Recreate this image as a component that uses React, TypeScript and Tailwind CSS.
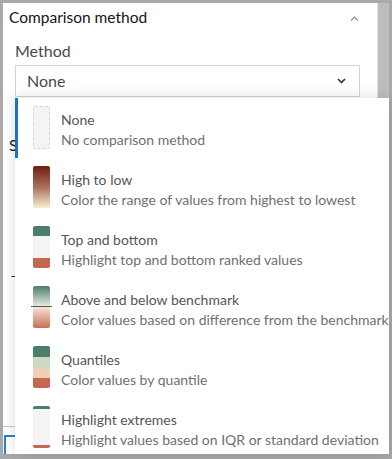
import React from "react";

type Method = { title: string; sub: string; swatch: React.ReactNode };

const font = { fontFamily: "Lato, 'Open Sans', sans-serif" };

const Swatch: React.FC<{ kind: string }> = ({ kind }) => {
    if (kind === "none")
        return <div className="w-[17px] h-[43px] rounded-[2px] border border-dashed border-[#d6d6d6] bg-[#f4f4f4]" />;
    if (kind === "high")
        return <div className="w-[17px] h-[42px] rounded-[2px] bg-[linear-gradient(to_bottom,#6f1d12,#a8705a_50%,#f7efd3)]" />;
    if (kind === "topbottom")
        return (
            <div className="w-[17px] h-[42px] rounded-[2px] overflow-hidden flex flex-col">
                <div className="h-[10px] bg-[#4d7d6b]" />
                <div className="flex-1 bg-[#f4f4f4]" />
                <div className="h-[10px] bg-[#c4684f]" />
            </div>
        );
    if (kind === "bench")
        return (
            <div className="relative w-[17px] h-[42px]">
                <div className="h-full rounded-[2px] overflow-hidden flex flex-col">
                    <div className="h-1/2 bg-[linear-gradient(to_bottom,#4d7d6b,#eaf0e7)]" />
                    <div className="h-1/2 bg-[linear-gradient(to_bottom,#f6e6d6,#c66f57)]" />
                </div>
                <div className="absolute left-[-2px] right-[-2px] top-[20px] h-px bg-[#555]" />
            </div>
        );
    if (kind === "quant")
        return (
            <div className="w-[17px] h-[42px] rounded-[2px] overflow-hidden flex flex-col">
                <div className="flex-1 bg-[#4d7d6b]" />
                <div className="flex-1 bg-[#c9d9c4]" />
                <div className="flex-1 bg-[#eed0b8]" />
                <div className="flex-1 bg-[#c4684f]" />
            </div>
        );
    return (
        <div className="w-[17px] h-[42px] rounded-[2px] overflow-hidden flex flex-col">
            <div className="h-[3px] bg-[#4d7d6b]" />
            <div className="flex-1 bg-[#f4f4f4]" />
            <div className="h-[3px] bg-[#c4684f]" />
        </div>
    );
};

const methods: Method[] = [
    { title: "None", sub: "No comparison method", swatch: <Swatch kind="none" /> },
    { title: "High to low", sub: "Color the range of values from highest to lowest", swatch: <Swatch kind="high" /> },
    { title: "Top and bottom", sub: "Highlight top and bottom ranked values", swatch: <Swatch kind="topbottom" /> },
    { title: "Above and below benchmark", sub: "Color values based on difference from the benchmark", swatch: <Swatch kind="bench" /> },
    { title: "Quantiles", sub: "Color values by quantile", swatch: <Swatch kind="quant" /> },
    { title: "Highlight extremes", sub: "Highlight values based on IQR or standard deviation", swatch: <Swatch kind="extreme" /> },
];

const App: React.FC = () => {
    return (
        <div className="relative w-[392px] h-[459px] bg-[#a9a9a9] pt-[3px] pl-[3px] pr-[3px] pb-[5px] overflow-hidden" style={font}>
            <div className="flex h-full">
                {/* panel behind the menu */}
                <div className="flex-1 bg-white flex flex-col">
                    <div className="h-[30px] flex items-center justify-between pl-[6px] pr-[18px]">
                        <span className="text-[15.5px] text-[#151515]">Comparison method</span>
                        <svg width="9" height="5" viewBox="0 0 9 5" fill="none" stroke="#8a8a8a" strokeWidth="1.1">
                            <path d="M1 4.5L4.5 1L8 4.5" />
                        </svg>
                    </div>
                    <div className="pl-[12px] pr-[17px] pt-[8px]">
                        <div className="text-[16px] text-[#4a4a4a] leading-[20px]">Method</div>
                        <div className="mt-[4px] h-[32px] border border-[#d4d4d4] flex items-center justify-between pl-[11px] pr-[13px]">
                            <span className="text-[16px] text-[#4a4a4a]">None</span>
                            <svg width="9" height="6" viewBox="0 0 9 6" fill="none" stroke="#333" strokeWidth="1.6">
                                <path d="M1 1L4.5 4.5L8 1" />
                            </svg>
                        </div>
                    </div>
                    <div className="pl-[6px] pt-[36px] text-[16px] text-[#151515]">Style</div>
                    <div className="pl-[7px] pt-[108px] text-[14px] text-[#151515]">–</div>
                    <div className="mt-auto border-t border-[#c8c8c8] h-[28px] pt-[8px] pl-px">
                        <div className="h-full border-t-2 border-l-2 border-[#2a7fd0]" />
                    </div>
                </div>
                <div className="w-[12px] bg-[#bdbdbd] border-l border-[#e2e2e2]" />
            </div>

            {/* dropdown menu */}
            <div className="absolute left-[15px] top-[98px] right-[3px] bottom-[5px] bg-white overflow-hidden shadow-[0_0_14px_rgba(0,0,0,0.14)]">
                {methods.map((m, i) => (
                    <div
                        key={m.title}
                        className={`h-[60px] flex items-start gap-[11px] pl-[15px] border-l-[3px] ${i === 0 ? "border-[#1a73c8]" : "border-transparent"}`}
                    >
                        <div className="pt-[8px] shrink-0">{m.swatch}</div>
                        <div className="pt-[12px] whitespace-nowrap">
                            <div className="text-[14px] leading-[20px] text-[#555]">{m.title}</div>
                            <div className="text-[14px] leading-[20px] text-[#707070]">{m.sub}</div>
                        </div>
                    </div>
                ))}
            </div>
        </div>
    );
};

export default App;
